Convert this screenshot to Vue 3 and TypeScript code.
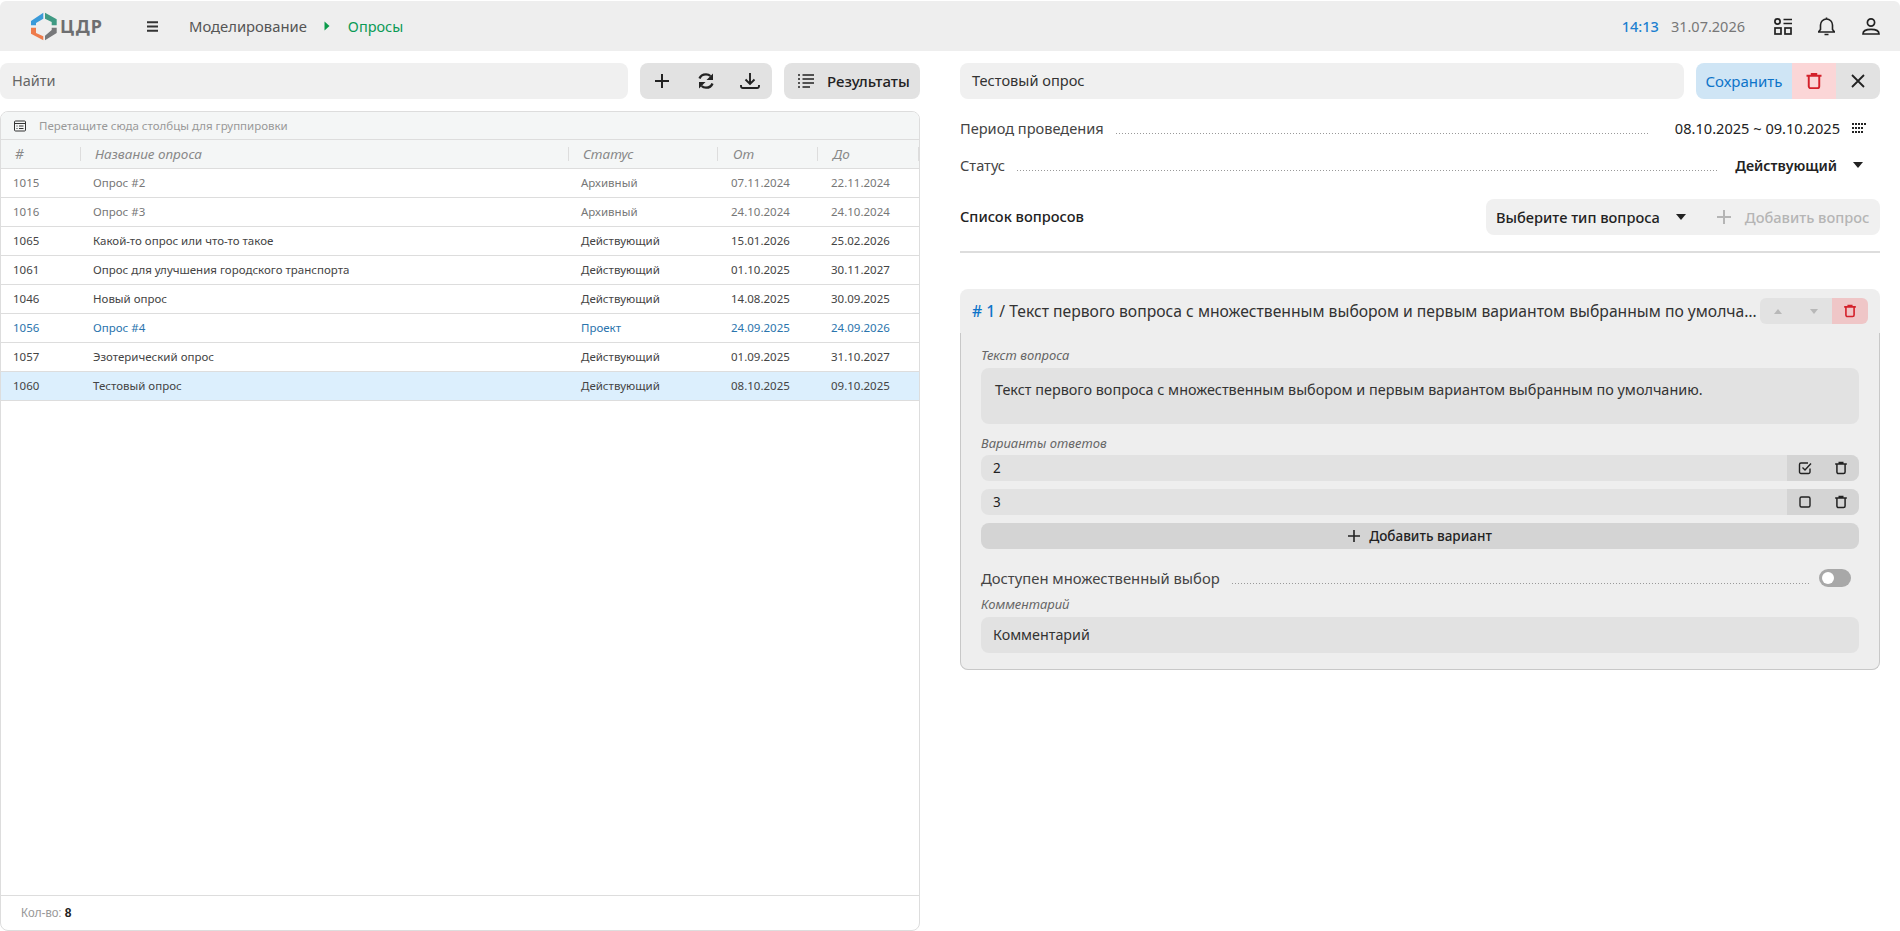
<script setup lang="ts">
const rows = [
  { id: 1015, name: 'Опрос #2', status: 'Архивный', from: '07.11.2024', to: '22.11.2024', cls: 'archived' },
  { id: 1016, name: 'Опрос #3', status: 'Архивный', from: '24.10.2024', to: '24.10.2024', cls: 'archived' },
  { id: 1065, name: 'Какой-то опрос или что-то такое', status: 'Действующий', from: '15.01.2026', to: '25.02.2026', cls: '' },
  { id: 1061, name: 'Опрос для улучшения городского транспорта', status: 'Действующий', from: '01.10.2025', to: '30.11.2027', cls: '' },
  { id: 1046, name: 'Новый опрос', status: 'Действующий', from: '14.08.2025', to: '30.09.2025', cls: '' },
  { id: 1056, name: 'Опрос #4', status: 'Проект', from: '24.09.2025', to: '24.09.2026', cls: 'project' },
  { id: 1057, name: 'Эзотерический опрос', status: 'Действующий', from: '01.09.2025', to: '31.10.2027', cls: '' },
  { id: 1060, name: 'Тестовый опрос', status: 'Действующий', from: '08.10.2025', to: '09.10.2025', cls: 'selected' },
]
const trash = 'M2 5h20M9 5V2.500h6V5M5 5v14a2.500 2.500 0 0 0 2.500 2.500h9A2.500 2.500 0 0 0 19 19V5'
</script>

<template>
  <div class="page">
    <header class="top">
      <div class="logo">
        <svg width="28" height="29" viewBox="0 0 28 29">
          <path d="M1 9 L13.300 .7 V6.700 L6 11 V13.300 H1 Z" fill="#3a9ad9" />
          <path d="M15 .7 L26.700 7.300 V13.300 H21.700 V10 L15 6.700 Z" fill="#3f9a83" />
          <path d="M1 15.700 H6 V21 L13.300 24.300 V28.300 L1 21.700 Z" fill="#ee7b4b" />
          <path d="M15 28.300 L26.700 21 V15.700 H21.700 V18 L15 23.700 Z" fill="#77787a" />
        </svg>
        <span class="logo-text">ЦДР</span>
      </div>
      <svg class="burger" width="11" height="11" viewBox="0 0 11 11"><path d="M0 1.200h11M0 5.500h11M0 9.800h11" stroke="#333" stroke-width="2" /></svg>
      <span class="crumb">Моделирование</span>
      <svg class="crumb-arrow" width="6" height="10" viewBox="0 0 6 10"><path d="M0.500 0.500 L5.500 5 L0.500 9.500 Z" fill="#0a9a4a" /></svg>
      <span class="crumb-active">Опросы</span>
      <div class="top-right">
        <span class="time">14:13</span>
        <span class="date">31.07.2026</span>
        <svg class="top-icon" width="18" height="17" viewBox="0 0 18 17" fill="none" stroke="#222" stroke-width="1.700">
          <circle cx="3.500" cy="3.500" r="2.600" /><path d="M9.500 1.500H18M9.500 5.500H18" />
          <rect x="1" y="10" width="6" height="6" /><rect x="11" y="10" width="6" height="6" />
        </svg>
        <svg class="top-icon bell" width="17" height="19" viewBox="0 0 17 19" fill="none" stroke="#222" stroke-width="1.600">
          <path d="M.5 15h16l-2-2.500V8a6 6 0 0 0-12 0v4.500ZM8.500 2V.5M6.500 17.500h4" />
        </svg>
        <svg class="top-icon user" width="18" height="17" viewBox="0 0 18 17" fill="none" stroke="#222" stroke-width="1.700">
          <circle cx="9" cy="4.500" r="3.600" /><path d="M1 16c0-3 3-4.600 8-4.600s8 1.600 8 4.600Z" />
        </svg>
      </div>
    </header>

    <main class="cols">
      <section class="left">
        <div class="toolbar">
          <div class="search">Найти</div>
          <div class="btn-group">
            <span class="tool"><svg width="18" height="18" viewBox="0 0 18 18"><path d="M9 2v14M2 9h14" stroke="#222" stroke-width="2" /></svg></span>
            <span class="tool"><svg width="18" height="18" viewBox="0 0 18 18" fill="none" stroke="#222" stroke-width="2.300">
              <path d="M2.500 6.500C3.500 3.800 6 2.300 9 2.300c1.800 0 3.300.6 4.400 1.700M15.500 11.500C14.500 14.200 12 15.700 9 15.700c-1.800 0-3.300-.6-4.400-1.700" />
              <path d="M16 1.500v6.500h-6.500Z M2 16.500V10h6.500Z" fill="#222" stroke="none" />
            </svg></span>
            <span class="tool"><svg width="20" height="16" viewBox="0 0 20 16" fill="none" stroke="#222" stroke-width="1.900">
              <path d="M10 0v10.500M5.500 6.500l4.500 4.500 4.500-4.500M1 12v1.200A1.800 1.800 0 0 0 2.800 15h14.400a1.800 1.800 0 0 0 1.800-1.800V12" />
            </svg></span>
          </div>
          <div class="results-btn">
            <svg width="16" height="14" viewBox="0 0 16 14" fill="none" stroke="#222" stroke-width="1.600">
              <path d="M0 1h2M4.500 1H16M0 5h2M4.500 5H16M0 9h2M4.500 9H16M0 13h2M4.500 13H12" />
            </svg>
            <span>Результаты</span>
          </div>
        </div>

        <div class="grid">
          <div class="group-panel">
            <svg width="12" height="12" viewBox="0 0 12 12" fill="none" stroke="#333" stroke-width="1">
              <rect x="0.500" y="1" width="11" height="10" rx="1" /><path d="M0.500 3.500h11M2.500 6h1M5 6h4.500M2.500 8.500h1M5 8.500h4.500" />
            </svg>
            <span>Перетащите сюда столбцы для группировки</span>
          </div>
          <div class="row head">
            <div class="c c-id">#</div>
            <div class="c c-name">Название опроса</div>
            <div class="c c-status">Статус</div>
            <div class="c c-date">От</div>
            <div class="c c-date last">До</div>
          </div>
          <div v-for="r in rows" :key="r.id" class="row body" :class="r.cls">
            <div class="c c-id">{{ r.id }}</div>
            <div class="c c-name">{{ r.name }}</div>
            <div class="c c-status">{{ r.status }}</div>
            <div class="c c-date">{{ r.from }}</div>
            <div class="c c-date last">{{ r.to }}</div>
          </div>
          <div class="grid-space"></div>
          <div class="grid-foot"><span class="foot-label">Кол-во:</span> <b>8</b></div>
        </div>
      </section>

      <section class="right">
        <div class="title-row">
          <div class="title-input">Тестовый опрос</div>
          <div class="actions">
            <div class="save">Сохранить</div>
            <div class="del">
              <svg width="18" height="18" viewBox="0 0 24 24" fill="none" stroke="#d4212b" stroke-width="2.600"><path :d="trash" /></svg>
            </div>
            <div class="close">
              <svg width="14" height="14" viewBox="0 0 14 14"><path d="M1 1l12 12M13 1L1 13" stroke="#222" stroke-width="1.800" /></svg>
            </div>
          </div>
        </div>

        <div class="field first">
          <span class="f-label">Период проведения</span>
          <span class="dots"></span>
          <span class="f-value period">08.10.2025 ~ 09.10.2025</span>
          <svg class="cal" width="15" height="12" viewBox="0 0 15 12" fill="#222">
            <rect x="0" y="1" width="2" height="2" /><rect x="3" y="1" width="2" height="2" /><rect x="6" y="1" width="2" height="2" /><rect x="9" y="1" width="2" height="2" /><rect x="12" y="1" width="2" height="2" />
            <rect x="0" y="5" width="2" height="2" /><rect x="3" y="5" width="2" height="2" /><rect x="6" y="5" width="2" height="2" /><rect x="9" y="5" width="2" height="2" />
            <rect x="0" y="9" width="2" height="2" /><rect x="3" y="9" width="2" height="2" /><rect x="6" y="9" width="2" height="2" /><rect x="9" y="9" width="2" height="2" />
          </svg>
        </div>
        <div class="field second">
          <span class="f-label">Статус</span>
          <span class="dots"></span>
          <span class="f-value status-value">Действующий</span>
          <span class="tri"></span>
        </div>

        <div class="list-head">
          <span class="list-title">Список вопросов</span>
          <div class="add-group">
            <span class="type">Выберите тип вопроса</span>
            <span class="tri small"></span>
            <svg class="plus-off" width="16" height="16" viewBox="0 0 16 16"><path d="M8 1v14M1 8h14" stroke="#b5b5b5" stroke-width="2" /></svg>
            <span class="add-off">Добавить вопрос</span>
          </div>
        </div>
        <div class="divider"></div>

        <article class="card">
          <div class="card-head">
            <div class="q-title"><span class="num"># 1</span> / Текст первого вопроса с множественным выбором и первым вариантом выбранным по умолчанию.</div>
            <div class="q-btns">
              <div class="q-arrow"><span class="mini up"></span></div>
              <div class="q-arrow"><span class="mini down"></span></div>
              <div class="q-del">
                <svg width="14" height="14" viewBox="0 0 24 24" fill="none" stroke="#d4212b" stroke-width="2.800"><path :d="trash" /></svg>
              </div>
            </div>
          </div>
          <div class="card-body">
            <div class="lbl">Текст вопроса</div>
            <div class="textarea">Текст первого вопроса с множественным выбором и первым вариантом выбранным по умолчанию.</div>
            <div class="lbl lbl-gap">Варианты ответов</div>
            <div class="answer">
              <span class="a-text">2</span>
              <div class="a-btns">
                <svg width="14" height="14" viewBox="0 0 14 14" fill="none" stroke="#222" stroke-width="1.400">
                  <path d="M12 7.500V11a1.500 1.500 0 0 1-1.500 1.500H3A1.500 1.500 0 0 1 1.500 11V3.500A1.500 1.500 0 0 1 3 2h7" /><path d="M4.500 6.500L7 9l6-6.500" />
                </svg>
              </div>
              <div class="a-del"><svg width="14" height="14" viewBox="0 0 24 24" fill="none" stroke="#222" stroke-width="2.600"><path :d="trash" /></svg></div>
            </div>
            <div class="answer">
              <span class="a-text">3</span>
              <div class="a-btns">
                <svg width="14" height="14" viewBox="0 0 14 14" fill="none" stroke="#222" stroke-width="1.400"><rect x="2" y="2" width="10" height="10" rx="1.500" /></svg>
              </div>
              <div class="a-del"><svg width="14" height="14" viewBox="0 0 24 24" fill="none" stroke="#222" stroke-width="2.600"><path :d="trash" /></svg></div>
            </div>
            <div class="add-variant">
              <svg width="12" height="12" viewBox="0 0 12 12"><path d="M6 0v12M0 6h12" stroke="#222" stroke-width="1.600" /></svg>
              <span>Добавить вариант</span>
            </div>
            <div class="multi">
              <span class="m-label">Доступен множественный выбор</span>
              <span class="dots"></span>
              <span class="toggle"><span class="knob"></span></span>
            </div>
            <div class="lbl comment-lbl">Комментарий</div>
            <div class="comment">Комментарий</div>
          </div>
        </article>
      </section>
    </main>
  </div>
</template>

<style>
html, body { margin: 0; background: #fff; }
</style>

<style scoped>
.page {
  width: 1900px;
  height: 931px;
  display: flex;
  flex-direction: column;
  font-family: "Noto Sans", "Open Sans", sans-serif;
  color: #222;
  overflow: hidden;
}
.top {
  height: 50px;
  margin-top: 1px;
  background: #eee;
  border-radius: 6px 6px 0 0;
  display: flex;
  align-items: center;
  flex: none;
}
.logo { display: flex; align-items: center; margin-left: 30px; width: 117px; }
.logo-text { font-weight: 700; font-size: 18px; color: #6d6e70; letter-spacing: 1px; margin-left: 2px; }
.crumb { margin-left: 31px; font-size: 14.800px; color: #555; }
.crumb-arrow { margin-left: 17px; }
.crumb-active { margin-left: 18px; font-size: 14.500px; color: #0a9a55; }
.top-right { margin-left: auto; display: flex; align-items: center; margin-right: 20px; }
.time { font-size: 14.500px; font-weight: 500; color: #1b7fd0; }
.date { font-size: 14.500px; color: #777; margin-left: 12px; margin-right: 29px; }
.top-icon.bell { margin-left: 26px; }
.top-icon.user { margin-left: 27px; }

.cols { flex: 1; display: flex; min-height: 0; padding-top: 12px; }
.left { width: 920px; display: flex; flex-direction: column; }
.right { width: 920px; margin-left: 40px; display: flex; flex-direction: column; }

.toolbar { display: flex; height: 36px; flex: none; }
.search {
  width: 628px; background: #f0f0f0; border-radius: 8px; font-size: 14.500px; color: #666;
  line-height: 35px; padding-left: 12px; box-sizing: border-box;
}
.btn-group {
  margin-left: 12px; width: 132px; background: #e2e2e2; border-radius: 8px;
  display: grid; grid-template-columns: repeat(3, 44px);
}
.tool { display: flex; align-items: center; justify-content: center; }
.results-btn {
  margin-left: 12px; width: 136px; background: #e2e2e2; border-radius: 8px;
  display: flex; align-items: center; padding-left: 14px; gap: 13px; box-sizing: border-box;
  font-size: 15px; font-weight: 500; color: #222;
}

.grid {
  margin-top: 12px; flex: 1; border: 1px solid #ddd; border-radius: 8px;
  display: flex; flex-direction: column; overflow: hidden; min-height: 0;
}
.group-panel {
  height: 27px; background: #f4f6f6; display: flex; align-items: center; gap: 13px; padding-left: 13px;
  font-size: 11.500px; color: #999; border-bottom: 1px solid #ddd; flex: none;
}
.row { display: flex; height: 29px; box-sizing: border-box; border-bottom: 1px solid #ddd; flex: none; }
.head { background: #f4f6f6; font-style: italic; font-size: 13.500px; color: #888; }
.c { display: flex; align-items: center; white-space: nowrap; position: relative; box-sizing: border-box; }
.c-id { width: 80px; padding-left: 12px; }
.c-name { width: 488px; padding-left: 12px; }
.c-status { width: 149px; padding-left: 12px; }
.c-date { width: 100px; padding-left: 13px; }
.c-date.last { flex: 1; }
.head .c-id { padding-left: 14px; }
.head .c-name { padding-left: 14px; }
.head .c-status { padding-left: 14px; }
.head .c-date { padding-left: 15px; }
.head .c::after {
  content: ""; position: absolute; right: 0; top: 7px; bottom: 7px; width: 1px; background: #ddd;
}
.body { font-size: 11.500px; color: #444; padding-bottom: 1px; }
.body.archived { color: #777; }
.body.project { color: #2a74ad; }
.body.selected { background: #dceffd; }
.grid-space { flex: 1; }
.grid-foot {
  height: 35px; border-top: 1px solid #ddd; flex: none; display: flex; align-items: center; gap: 3px;
  padding-left: 20px; font-family: "Liberation Sans", sans-serif; font-size: 12px; box-sizing: border-box;
}
.foot-label { color: #999; }
.grid-foot b { color: #222; font-weight: 700; }

.title-row { display: flex; height: 36px; flex: none; }
.title-input {
  flex: 1; background: #f0f0f0; border-radius: 8px; padding-left: 12px; font-size: 14.600px; line-height: 35px; color: #333;
}
.actions { margin-left: 12px; display: flex; width: 184px; border-radius: 8px; overflow: hidden; }
.save { width: 96px; background: #cfe5f5; color: #0d74c9; font-size: 15px; display: flex; align-items: center; justify-content: center; }
.del { width: 44px; background: #fbd6d7; display: flex; align-items: center; justify-content: center; }
.close { flex: 1; background: #e2e2e2; display: flex; align-items: center; justify-content: center; }

.field { display: flex; align-items: center; font-size: 14.600px; height: 20px; flex: none; }
.first { margin-top: 19px; }
.second { margin-top: 17px; }
.f-label { color: #444; }
.dots {
  flex: 1; height: 1px; margin: 10px 12px 0;
  background-image: linear-gradient(to right, #999 1px, transparent 1px);
  background-size: 3px 1px;
  background-repeat: repeat-x;
}
.f-value { color: #222; }
.period { margin-left: 14px; margin-right: 12px; }
.cal { margin-right: 13px; }
.status-value { font-weight: 600; font-size: 14.200px; margin-left: 5px; }
.tri {
  width: 0; height: 0; border-left: 5px solid transparent; border-right: 5px solid transparent;
  border-top: 6px solid #222; margin-left: 16px; margin-right: 17px;
}
.list-head { display: flex; align-items: center; justify-content: space-between; margin-top: 24px; height: 36px; flex: none; }
.list-title { font-size: 14.600px; font-weight: 500; color: #222; margin-bottom: 2px; }
.add-group {
  width: 394px; height: 36px; background: #f0f0f0; border-radius: 8px; display: flex; align-items: center;
  box-sizing: border-box; padding-left: 10px; font-size: 14.600px;
}
.type { font-weight: 500; }
.tri.small { margin-left: 16px; margin-right: 0; }
.plus-off { margin-left: 30px; }
.add-off { margin-left: 13px; color: #b5b5b5; font-weight: 500; }
.divider { margin-top: 16px; height: 2px; background: #ddd; flex: none; }

.card {
  margin-top: 36px; background: #eee; border-radius: 8px; height: 381px; flex: none;
  display: flex; flex-direction: column;
}
.card-head { display: flex; align-items: center; height: 44px; box-sizing: border-box; padding: 0 12px; flex: none; }
.q-title { flex: 1; min-width: 0; overflow: hidden; white-space: nowrap; text-overflow: ellipsis; font-size: 15.700px; color: #333; }
.num { color: #0d74c9; font-weight: 500; }
.q-btns { display: flex; width: 108px; height: 26px; border-radius: 6px; overflow: hidden; flex: none; }
.q-arrow { width: 36px; background: #e2e2e2; display: flex; align-items: center; justify-content: center; }
.q-del { width: 36px; background: #efc6c7; display: flex; align-items: center; justify-content: center; }
.mini { width: 0; height: 0; border-left: 4px solid transparent; border-right: 4px solid transparent; }
.mini.up { border-bottom: 5px solid #b8b8b8; }
.mini.down { border-top: 5px solid #b8b8b8; }
.card-body {
  flex: 1; padding: 14px 20px 0; display: flex; flex-direction: column;
  border: 1px solid #c8c8c8; border-top: 0; border-radius: 0 0 8px 8px;
}
.lbl { font-size: 13px; font-style: italic; color: #666; height: 16px; line-height: 16px; }
.textarea {
  margin-top: 5px; height: 56px; background: #e2e2e2; border-radius: 8px; box-sizing: border-box;
  padding: 12px 14px; font-size: 14.400px; color: #333; flex: none;
}
.lbl-gap { margin-top: 11px; }
.answer {
  margin-top: 4px; margin-bottom: 4px; height: 26px; background: #e2e2e2; border-radius: 8px; overflow: hidden;
  display: flex; align-items: center; font-size: 13.500px; flex: none;
}
.a-text { flex: 1; padding-left: 12px; }
.a-btns { width: 36px; height: 26px; display: flex; align-items: center; justify-content: center; background: #d4d4d4; }
.a-del { width: 36px; height: 26px; display: flex; align-items: center; justify-content: center; background: #d4d4d4; }
.add-variant {
  margin-top: 4px; height: 26px; background: #d4d4d4; border-radius: 8px; display: flex; align-items: center; justify-content: center;
  gap: 9px; font-size: 13.500px; font-weight: 500; color: #222; flex: none;
}
.multi { margin-top: 19px; height: 20px; display: flex; align-items: center; font-size: 14.800px; color: #444; flex: none; }
.multi .dots { margin: 10px 8px 0 12px; }
.toggle {
  width: 32px; height: 18px; background: #a8a8a8; border-radius: 9px; position: relative; margin-right: 8px; flex: none;
}
.knob { position: absolute; left: 3px; top: 3px; width: 12px; height: 12px; border-radius: 50%; background: #fff; }
.comment-lbl { margin-top: 8px; }
.comment {
  margin-top: 5px; height: 36px; background: #e2e2e2; border-radius: 8px; line-height: 36px; padding-left: 12px; font-size: 14.300px; color: #333; flex: none;
}
</style>
